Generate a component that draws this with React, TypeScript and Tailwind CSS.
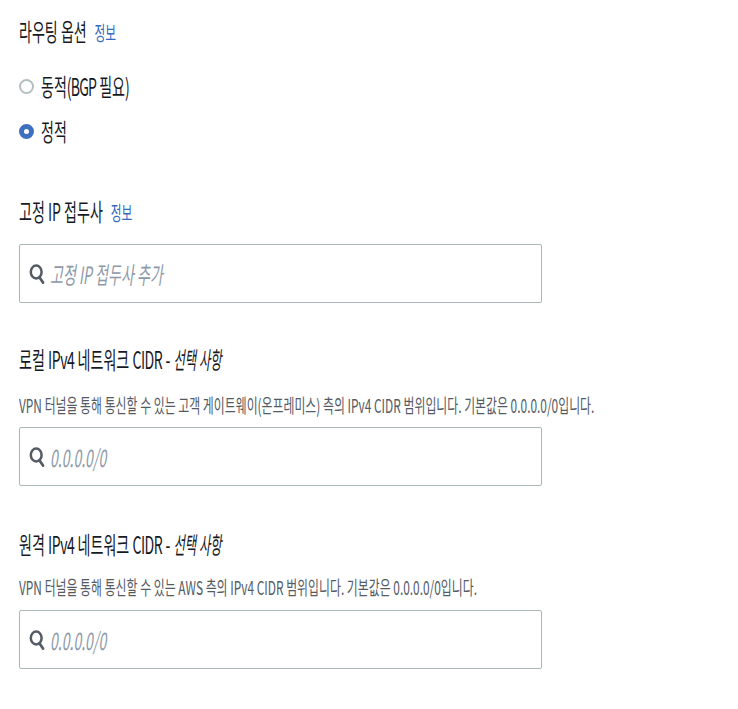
import React from "react";

const FONT = "font-['Noto_Sans_CJK_KR','Noto_Sans',sans-serif]";

function Line({ className, children }: { className?: string; children: React.ReactNode }) {
    // 원본 화면은 글자가 가로로 좁게 찍혀 있어 한 줄씩 가로로 줄인다
    return (
        <div className={`origin-left whitespace-nowrap ${className ?? ""}`}>
            {children}
        </div>
    );
}

function SearchIcon() {
    return (
        <svg width="17" height="20" viewBox="0 0 17 20" fill="none" className="shrink-0">
            <ellipse cx="7.2" cy="8" rx="5.4" ry="6.4" stroke="#545b64" strokeWidth="2.5" />
            <path d="M10.6 13.4 L14 18.6" stroke="#545b64" strokeWidth="2.7" strokeLinecap="round" />
        </svg>
    );
}

function SearchBox({ placeholder }: { placeholder: string }) {
    return (
        <div className="w-[523px] h-[59px] border border-[#aab7b8] rounded-[2px] bg-white flex items-center pl-[9px]">
            <SearchIcon />
            <div className="ml-[4px] h-full flex items-center">
                <Line className="scale-x-[0.585] text-[24px] italic text-[#8d99a8] leading-[30px]">{placeholder}</Line>
            </div>
        </div>
    );
}

function Optional() {
    return <i className="inline-block origin-left scale-x-[0.88]">선택 사항</i>;
}

export default function App() {
    return (
        <div className={`min-h-screen bg-white pl-[19px] pt-[16px] text-[#16191f] ${FONT}`}>
            {/* 라우팅 옵션 */}
            <Line className="scale-x-[0.585] text-[24px] leading-[30px]">
                라우팅 옵션 <span className="ml-[8px] text-[20px] text-[#3569c0]">정보</span>
            </Line>
            <div className="mt-[23px] flex items-center h-[30px]">
                <span className="w-[15px] h-[15px] rounded-full border-2 border-[#b4bfc0] bg-white shrink-0" />
                <div className="ml-[7px]">
                    <Line className="scale-x-[0.585] text-[24px] leading-[30px]">
                        동적<span className="tracking-[-0.06em]">(BGP</span> 필요)
                    </Line>
                </div>
            </div>
            <div className="mt-[15px] flex items-center h-[30px]">
                <span className="w-[15px] h-[15px] rounded-full border-[5px] border-[#3f6fbf] bg-white shrink-0" />
                <div className="ml-[7px]">
                    <Line className="scale-x-[0.585] text-[24px] leading-[30px]">정적</Line>
                </div>
            </div>

            {/* 고정 IP 접두사 */}
            <Line className="mt-[50px] scale-x-[0.585] text-[24px] leading-[30px]">
                고정 IP 접두사 <span className="ml-[8px] text-[20px] text-[#3569c0]">정보</span>
            </Line>
            <div className="mt-[16px]">
                <SearchBox placeholder="고정 IP 접두사 추가" />
            </div>

            {/* 로컬 IPv4 */}
            <Line className="mt-[41px] scale-x-[0.585] text-[24px] leading-[30px]">
                로컬 <span className="tracking-[-0.03em]">IPv4</span> 네트워크{" "}
                <span className="tracking-[-0.03em]">CIDR</span> - <Optional />
            </Line>
            <Line className="mt-[19px] scale-x-[0.626] text-[19px] leading-[24px] text-[#545b64]">
                VPN 터널을 통해 통신할 수 있는 고객 게이트웨이(온프레미스) 측의 IPv4 CIDR 범위입니다. 기본값은 0.0.0.0/0입니다.
            </Line>
            <div className="mt-[10px]">
                <SearchBox placeholder="0.0.0.0/0" />
            </div>

            {/* 원격 IPv4 */}
            <Line className="mt-[43px] scale-x-[0.585] text-[24px] leading-[30px]">
                원격 <span className="tracking-[-0.03em]">IPv4</span> 네트워크{" "}
                <span className="tracking-[-0.03em]">CIDR</span> - <Optional />
            </Line>
            <Line className="mt-[16px] scale-x-[0.626] text-[19px] leading-[24px] text-[#545b64]">
                VPN 터널을 통해 통신할 수 있는 AWS 측의 IPv4 CIDR 범위입니다. 기본값은 0.0.0.0/0입니다.
            </Line>
            <div className="mt-[11px]">
                <SearchBox placeholder="0.0.0.0/0" />
            </div>
        </div>
    );
}
